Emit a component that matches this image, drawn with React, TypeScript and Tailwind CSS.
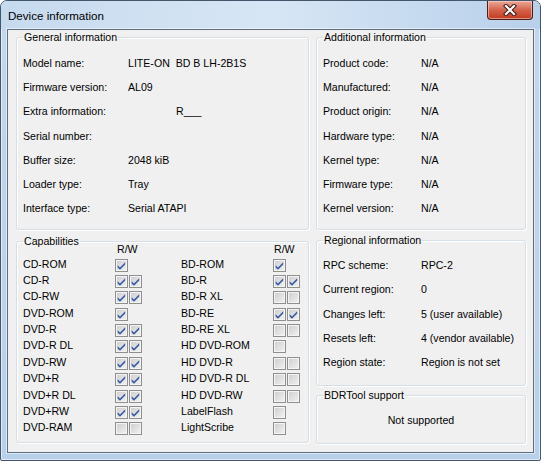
import React from "react";

const GEN: [string, string, string?][] = [
  ["Model name:", "LITE-ON  BD B LH-2B1S"],
  ["Firmware version:", "AL09"],
  ["Extra information:", "R___", "pl-[48px]"],
  ["Serial number:", ""],
  ["Buffer size:", "2048 kiB"],
  ["Loader type:", "Tray"],
  ["Interface type:", "Serial ATAPI"],
];

const ADD: [string, string][] = [
  ["Product code:", "N/A"],
  ["Manufactured:", "N/A"],
  ["Product origin:", "N/A"],
  ["Hardware type:", "N/A"],
  ["Kernel type:", "N/A"],
  ["Firmware type:", "N/A"],
  ["Kernel version:", "N/A"],
];

const REG: [string, string][] = [
  ["RPC scheme:", "RPC-2"],
  ["Current region:", "0"],
  ["Changes left:", "5 (user available)"],
  ["Resets left:", "4 (vendor available)"],
  ["Region state:", "Region is not set"],
];

type Cap = [string, boolean[]];
const CAPS: [Cap, Cap][] = [
  [["CD-ROM", [true]], ["BD-ROM", [true]]],
  [["CD-R", [true, true]], ["BD-R", [true, true]]],
  [["CD-RW", [true, true]], ["BD-R XL", [false, false]]],
  [["DVD-ROM", [true]], ["BD-RE", [true, true]]],
  [["DVD-R", [true, true]], ["BD-RE XL", [false, false]]],
  [["DVD-R DL", [true, true]], ["HD DVD-ROM", [false]]],
  [["DVD-RW", [true, true]], ["HD DVD-R", [false, false]]],
  [["DVD+R", [true, true]], ["HD DVD-R DL", [false, false]]],
  [["DVD+R DL", [true, true]], ["HD DVD-RW", [false, false]]],
  [["DVD+RW", [true, true]], ["LabelFlash", [false]]],
  [["DVD-RAM", [false, false]], ["LightScribe", [false]]],
];

function Check({ on }: { on: boolean }) {
  return (
    <div className="w-[13px] h-[13px] border border-[#8f8f8f] bg-linear-to-br from-[#cdcdcd] to-[#f2f2f2] shadow-[inset_0_0_0_1px_#f4f4f4] flex items-center justify-center">
      {on && (
        <svg width="11" height="11" viewBox="0 0 11 11">
          <path d="M1.6 5.2 L4 7.6 L9.2 2.2 L9.2 4.6 L4 9.8 L1.6 7.4 Z" fill="#3a5aa2" />
        </svg>
      )}
    </div>
  );
}

function Group({
  title,
  className,
  children,
}: {
  title: string;
  className: string;
  children?: React.ReactNode;
}) {
  return (
    <fieldset
      className={`border border-[#d5dfe5] rounded-[3px] shadow-[inset_1px_1px_0_#ffffff,1px_1px_0_#ffffff] px-[6px] min-w-0 ${className}`}
    >
      <legend className="px-px leading-[13px]">{title}</legend>
      {children}
    </fieldset>
  );
}

function InfoRows({
  rows,
  labelW,
  rowH,
}: {
  rows: [string, string, string?][];
  labelW: string;
  rowH: string;
}) {
  return (
    <div className="flex flex-col">
      {rows.map(([l, v, extra]) => (
        <div key={l} className={`flex items-center ${rowH}`}>
          <span className={`${labelW} shrink-0`}>{l}</span>
          <span className={`whitespace-pre ${extra ?? ""}`}>{v}</span>
        </div>
      ))}
    </div>
  );
}

export default function App() {
  return (
    <div className="w-[541px] h-[461px] flex flex-col border border-[#44566b] rounded-t-[7px] rounded-b-[2px] shadow-[inset_0_0_0_1px_rgba(255,255,255,0.55)] bg-linear-to-b from-[#c3d7ed] to-[#b9d0ea] overflow-hidden font-['Liberation_Sans',Arial,sans-serif] text-black">
      {/* title bar */}
      <div className="h-[28px] flex justify-between shrink-0 bg-linear-to-r from-[#c6daee] via-[#d7e6f5] to-[#b8d0ea]">
        <span className="self-center pl-[7px] pt-px text-[11.6px] leading-[14px] text-black">
          Device information
        </span>
        <div className="self-start mr-[7px] w-[46px] h-[19px] rounded-b-[4px] border border-t-0 border-[#4a1d16] bg-linear-to-b from-[#e8a99a] via-[#d4624b] to-[#c2381d] shadow-[inset_0_0_0_1px_rgba(255,220,210,0.55)] flex items-center justify-center">
          <svg width="14" height="12" viewBox="0 0 14 12">
            <path d="M3 2 L11 10 M11 2 L3 10" stroke="#3a1a14" strokeWidth="4.2" strokeLinecap="square" />
            <path d="M3 2 L11 10 M11 2 L3 10" stroke="#ffffff" strokeWidth="2.2" strokeLinecap="square" />
          </svg>
        </div>
      </div>

      {/* client */}
      <div className="flex-1 mx-[6px] mb-[7px] border border-[#5d6e82] shadow-[0_0_0_1px_rgba(255,255,255,0.5)] bg-[#f0f0f0] pl-[8px] pt-px flex gap-[7px] text-[10.6px] leading-[13px]">
        <div className="w-[293px] flex flex-col gap-[5px]">
          <Group title="General information" className="h-[199px] pt-[7px]">
            <InfoRows rows={GEN} labelW="w-[105px]" rowH="h-[24.3px]" />
          </Group>
          <Group title="Capabilities" className="h-[208px]">
            <div className="grid grid-cols-[92px_66px_92px_66px] -mt-[5px]">
              <span className="h-[13px]" />
              <span className="h-[13px] pl-[2px]">R/W</span>
              <span className="h-[13px]" />
              <span className="h-[13px] pl-[1px]">R/W</span>
              {CAPS.map(([a, b]) => (
                <React.Fragment key={a[0]}>
                  <span className="h-[16.36px] flex items-center">{a[0]}</span>
                  <span className="h-[16.36px] flex items-center gap-px pt-[2px]">
                    {a[1].map((on, i) => (
                      <Check key={i} on={on} />
                    ))}
                  </span>
                  <span className="h-[16.36px] flex items-center">{b[0]}</span>
                  <span className="h-[16.36px] flex items-center gap-px pt-[2px]">
                    {b[1].map((on, i) => (
                      <Check key={i} on={on} />
                    ))}
                  </span>
                </React.Fragment>
              ))}
            </div>
          </Group>
        </div>
        <div className="w-[210px] flex flex-col">
          <Group title="Additional information" className="h-[199px] pt-[7px]">
            <InfoRows rows={ADD} labelW="w-[98px]" rowH="h-[24.3px]" />
          </Group>
          <Group title="Regional information" className="h-[152px] mt-[4px] pt-[6.5px]">
            <InfoRows rows={REG} labelW="w-[98px]" rowH="h-[24.25px]" />
          </Group>
          <Group title="BDRTool support" className="h-[55px] mt-[3px] pt-[11.5px]">
            <div className="text-center leading-[13px]">Not supported</div>
          </Group>
        </div>
      </div>
    </div>
  );
}
